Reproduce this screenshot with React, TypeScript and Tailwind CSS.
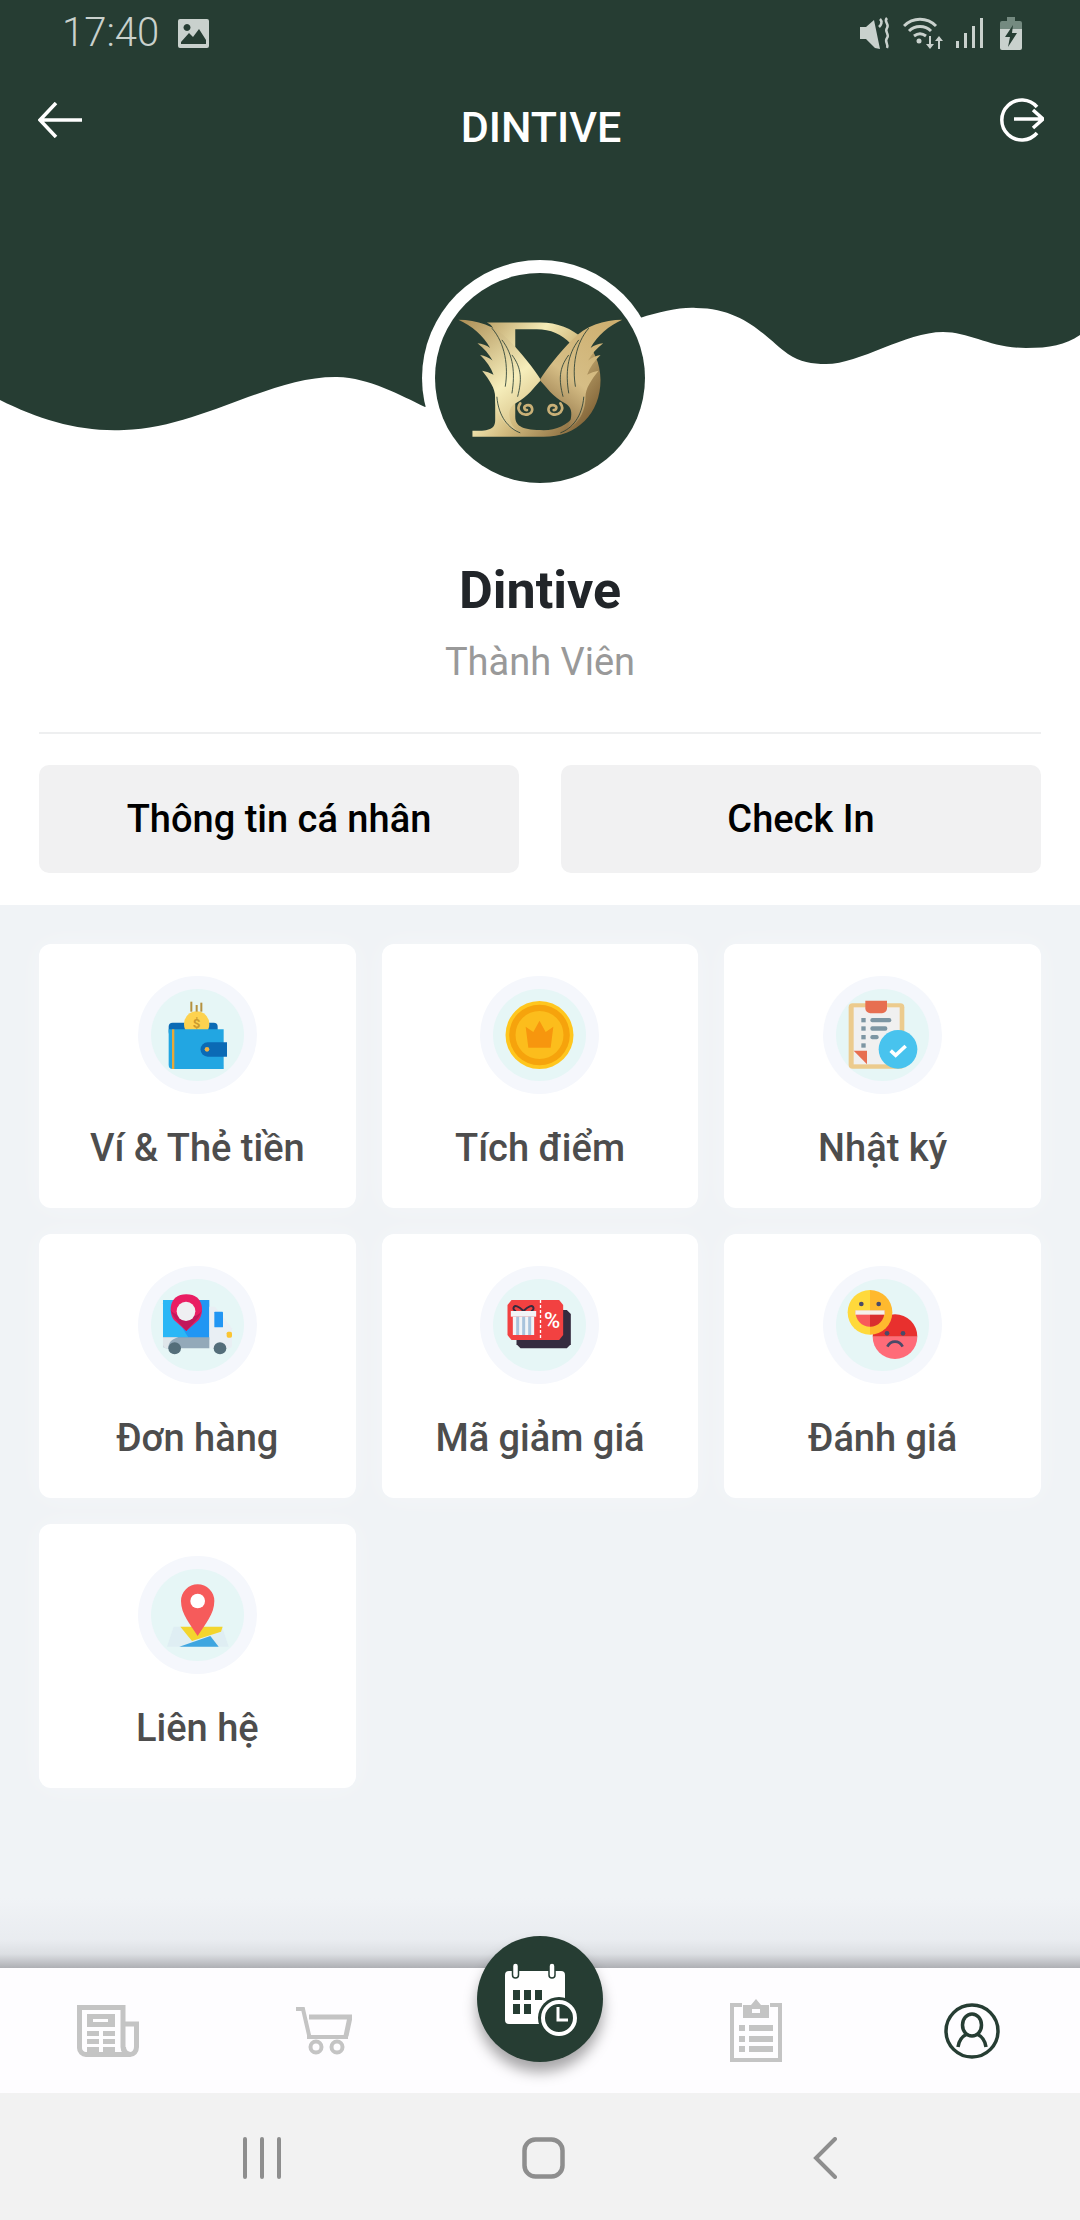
import * as React from 'react'

const FEATHER =
  'M235 240 C290 240 345 258 385 300 C425 340 460 385 482 420 C462 440 445 470 405 490 C392 497 385 510 388 530 C390 550 400 565 420 578 C370 560 345 520 345 470 C345 445 328 420 306 392 C318 394 330 398 340 404 C332 382 318 362 300 345 C314 347 326 353 337 362 C326 342 312 325 292 310 C306 311 318 316 330 324 C310 288 275 258 235 240Z'

function Logo() {
  return (
    <svg viewBox="165 100 628 628" className="w-full h-full">
      <defs>
        <linearGradient id="gold" x1="0" y1="0" x2="1" y2="0.7">
          <stop offset="0" stopColor="#b2945a" />
          <stop offset="0.4" stopColor="#f4ebb6" />
          <stop offset="0.62" stopColor="#d3bc80" />
          <stop offset="1" stopColor="#86683b" />
        </linearGradient>
        <linearGradient id="goldLeft" gradientUnits="userSpaceOnUse" x1="240" y1="240" x2="470" y2="540">
          <stop offset="0" stopColor="#ad8f56" />
          <stop offset="0.62" stopColor="#f6eebb" />
          <stop offset="1" stopColor="#d3bc82" />
        </linearGradient>
        <linearGradient id="goldRight" gradientUnits="userSpaceOnUse" x1="240" y1="240" x2="470" y2="540">
          <stop offset="0" stopColor="#cdae6e" />
          <stop offset="0.6" stopColor="#d6be86" />
          <stop offset="1" stopColor="#8a6c40" />
        </linearGradient>
      </defs>
      <path
        fill="url(#gold)"
        fillRule="evenodd"
        d="M320 248 H480 C580 248 660 320 660 420 C660 520 590 590 490 590 H277 V572 C320 572 345 570 345 540 V300 C345 265 335 255 320 248Z M405 268 V530 C405 560 430 570 490 570 C570 570 610 510 610 420 C610 330 550 268 470 268Z"
      />
      <path fill="url(#goldLeft)" d={FEATHER} />
      <path fill="url(#goldRight)" d={FEATHER} transform="translate(960 0) scale(-1 1)" />
      <g fill="none" stroke="#263d33" strokeWidth="2.5">
        <path d="M335 265 C375 310 385 380 375 440" />
        <path d="M365 300 C400 345 405 400 395 460" />
        <path d="M395 345 C425 385 425 420 412 470" />
        <path d="M350 470 C355 530 385 565 420 578" />
        <path d="M625 265 C585 310 575 380 585 440" />
        <path d="M595 300 C560 345 555 400 565 460" />
        <path d="M565 345 C535 385 535 420 548 470" />
        <path d="M610 470 C605 530 575 565 540 578" />
      </g>
      <g fill="none" stroke="#c9b077" strokeWidth="8" strokeLinecap="round">
        <path d="M420 490 C405 510 425 528 445 522 C462 515 458 492 438 496 C428 500 432 510 440 510" />
        <path d="M540 490 C555 510 535 528 515 522 C498 515 502 492 522 496 C532 500 528 510 520 510" />
      </g>
    </svg>
  )
}

function StatusBar() {
  return (
    <div className="relative h-[66px] flex items-center justify-between pl-[62px] pr-[58px] text-[#c9d1cd]">
      <div className="flex items-center gap-[19px]">
        <span className="text-[40px] font-light leading-none">17:40</span>
        <svg viewBox="0 0 31 29" className="w-[31px] h-[29px]">
          <path fill="currentColor" fillRule="evenodd" d="M2 0 H29 a2 2 0 0 1 2 2 V27 a2 2 0 0 1 -2 2 H2 a2 2 0 0 1 -2 -2 V2 a2 2 0 0 1 2 -2Z M3 25 H28 V21 L21 10 L15 18 L11 14 L3 23Z M9 5 a3.5 3.5 0 1 0 .01 0Z" />
        </svg>
      </div>
      <div className="flex items-center">
        <svg viewBox="0 0 31 32" className="w-[31px] h-[32px] mr-[12px]">
          <path fill="currentColor" d="M0 10 H6 L14 3 L20 32 L15 31 L6 22 H0Z" />
          <path fill="none" stroke="currentColor" strokeWidth="2.5" d="M27 1 c-4 4 3 6 0 10 c-3 4 3 6 0 10 c-3 4 2 6 0 10 M20 2 c3 3 1 6 -1 8" />
        </svg>
        <svg viewBox="0 0 41 32" className="w-[41px] h-[32px] mr-[12px]">
          <g fill="none" stroke="currentColor" strokeWidth="3">
            <path d="M1 9 C10 0 24 0 33 9" />
            <path d="M6 14 C12 8 22 8 28 14" />
            <path d="M11 19 C15 16 19 16 23 19" />
          </g>
          <circle cx="16" cy="24" r="2.5" fill="currentColor" />
          <path fill="currentColor" d="M26 19 H28 V27 H31 L27 32 L23 27 H26Z M35 32 H37 V24 H40 L36 19 L32 24 H35Z" />
        </svg>
        <svg viewBox="0 0 28 30" className="w-[28px] h-[30px] mr-[16px]">
          <path fill="currentColor" d="M0 23 H3 V30 H0Z M8 15 H11 V30 H8Z M16 8 H19 V30 H16Z M24 0 H27 V30 H24Z" />
        </svg>
        <svg viewBox="0 0 22 33" className="w-[22px] h-[33px]">
          <path fill="#748a80" d="M7 0 H15 V4 H20 a2 2 0 0 1 2 2 V12 H0 V6 a2 2 0 0 1 2 -2 H7Z" />
          <path fill="currentColor" d="M0 12 H22 V31 a2 2 0 0 1 -2 2 H2 a2 2 0 0 1 -2 -2Z" />
          <path fill="#263d33" d="M13 8 L5 20 H10 L8 30 L17 16 H12Z" />
        </svg>
      </div>
    </div>
  )
}

function AppBar() {
  return (
    <div className="relative h-[108px] flex items-center justify-between pl-[38px] pr-[36px]">
      <svg viewBox="0 0 44 36" className="w-[44px] h-[36px]" fill="none" stroke="white" strokeWidth="3.5">
        <path d="M44 18 H3 M18 1 L2 18 L18 35" />
      </svg>
      <span className="text-[43px] font-medium text-white leading-none mt-[14px]">DINTIVE</span>
      <svg viewBox="0 0 44 46" className="w-[44px] h-[46px]" fill="none" stroke="white" strokeWidth="3.5">
        <path d="M37 10 A20 20 0 1 0 37 36" />
        <path d="M14 22 H42 M33 13 L43 22 L33 31" />
      </svg>
    </div>
  )
}

function Hero() {
  return (
    <section className="relative bg-white h-[905px] shrink-0">
      <svg viewBox="0 0 1080 440" className="absolute top-0 left-0 w-[1080px] h-[440px]">
        <path
          fill="#263d33"
          d="M0 0 H1080 V335 C1065 345 1050 348 1026 348 C990 348 970 332 943 332 C905 332 860 364 826 364 C812 364 800 362 788 354 C768 340 745 308 696 308 C680 307 660 312 640 318 L425 407 C400 395 370 378 337 377 C270 376 200 428 124 430 C80 432 40 420 0 400Z"
        />
      </svg>
      <StatusBar />
      <AppBar />
      <div className="relative mt-[86px] mx-auto w-[236px] h-[236px] rounded-full bg-white p-[13px]">
        <div className="w-full h-full rounded-full bg-[#263d33]">
          <Logo />
        </div>
      </div>
      <div className="relative mt-[65px] flex flex-col items-center">
        <h1 className="text-[52px] font-bold leading-[60px] text-[#212529]">Dintive</h1>
        <p className="mt-[17px] text-[38px] leading-[48px] text-[#999999]">Thành Viên</p>
      </div>
      <div className="mt-[46px] mx-[39px] h-[2px] bg-[#eeeff0]" />
      <div className="mt-[31px] mx-[39px] flex gap-[42px]">
        <button className="flex-1 h-[108px] rounded-[10px] bg-[#f1f1f2] text-[38px] font-medium text-black">Thông tin cá nhân</button>
        <button className="flex-1 h-[108px] rounded-[10px] bg-[#f1f1f2] text-[38px] font-medium text-black">Check In</button>
      </div>
    </section>
  )
}

function WalletIcon() {
  return (
    <svg viewBox="113 48 357 354" className="w-full h-full">
      <rect x="205" y="188" width="147" height="40" rx="12" fill="#0b6ab5" />
      <circle cx="289" cy="192" r="38" fill="#fdd24f" />
      <rect x="270" y="125" width="6" height="30" fill="#b5913f" />
      <rect x="286" y="135" width="6" height="20" fill="#b5913f" />
      <rect x="300" y="128" width="6" height="27" fill="#b5913f" />
      <text x="289" y="205" textAnchor="middle" fontSize="40" fontWeight="700" fill="#c99a2e" fontFamily="Roboto, sans-serif">$</text>
      <path d="M205 208 H370 V327 H217 a12 12 0 0 1 -12 -12Z" fill="#22a6e2" />
      <rect x="215" y="208" width="7" height="119" fill="#e8a838" />
      <path d="M322 247 H380 V290 H322 a21 21 0 0 1 0 -43Z" fill="#0b6ab5" />
      <circle cx="320" cy="268" r="7" fill="#f0b040" />
    </svg>
  )
}

function CoinIcon() {
  return (
    <svg viewBox="113 48 357 354" className="w-full h-full">
      <circle cx="291.5" cy="225" r="102" fill="#ffc61e" />
      <circle cx="291.5" cy="225" r="91" fill="#f6a30c" />
      <circle cx="291.5" cy="225" r="72" fill="#fcbd1c" />
      <path d="M258 263 L250 200 L273 216 L291.5 182 L310 216 L333 200 L325 263Z" fill="#f7960e" />
    </svg>
  )
}

function ClipboardIcon() {
  return (
    <svg viewBox="128 48 357 354" className="w-full h-full">
      <rect x="205" y="130" width="167" height="196" rx="12" fill="#eccb8d" />
      <rect x="220" y="142" width="138" height="171" fill="#f0f0f0" />
      <path d="M255 122 H320 V145 a15 15 0 0 1 -15 15 H270 a15 15 0 0 1 -15 -15Z" fill="#e76f51" />
      <g fill="#7d96a3">
        <rect x="243" y="174" width="13" height="13" />
        <rect x="243" y="199" width="13" height="13" />
        <rect x="243" y="225" width="13" height="13" />
        <rect x="243" y="250" width="13" height="13" />
        <rect x="270" y="174" width="63" height="13" rx="6" />
        <rect x="270" y="199" width="51" height="13" rx="6" />
        <rect x="270" y="225" width="25" height="13" rx="6" />
      </g>
      <path d="M220 272 H260 V313Z" fill="#e76f51" />
      <circle cx="353" cy="268" r="58" fill="#48c3ee" />
      <path d="M331 272 L346 286 L376 258" fill="none" stroke="white" strokeWidth="11" />
    </svg>
  )
}

function TruckIcon() {
  return (
    <svg viewBox="114 48 357 354" className="w-full h-full">
      <path d="M189 160 a10 10 0 0 1 10 -10 H328 V270 H189Z" fill="#2196f3" />
      <path d="M189 150 H225 C225 200 250 240 265 262 H189Z" fill="#2ab7f6" />
      <path d="M328 170 H345 L396 235 V285 a10 10 0 0 1 -10 10 H328Z" fill="#e9eff4" />
      <rect x="343" y="185" width="26" height="47" rx="2" fill="#2196f3" />
      <rect x="380" y="245" width="16" height="18" rx="5" fill="#fbc531" />
      <path d="M189 262 H328 V295 H199 a10 10 0 0 1 -10 -10Z" fill="#93a9b9" />
      <path d="M189 262 H235 C215 268 205 278 205 295 H199 a10 10 0 0 1 -10 -10Z" fill="#dfe6ea" />
      <ellipse cx="224" cy="295" rx="19" ry="18" fill="#546e7a" />
      <ellipse cx="360" cy="295" rx="19" ry="18" fill="#546e7a" />
      <path d="M259 243 L222 210 C205 190 205 133 259 133 C313 133 313 190 296 210Z" fill="#e91e63" />
      <path d="M259 243 C245 225 218 205 212 180 C225 200 290 215 306 180 C300 205 272 225 259 243Z" fill="#c2185b" />
      <ellipse cx="258" cy="184" rx="28" ry="29" fill="#efeff2" />
    </svg>
  )
}

function VoucherIcon() {
  return (
    <svg viewBox="1143 48 354 354" className="w-full h-full">
      <path d="M1251 180 H1402 L1414 192 V283 L1402 295 H1263 L1251 283Z" fill="#352c3f" />
      <path d="M1236 150 H1379 L1391 165 V255 L1379 270 H1236 L1224 255 V165Z" fill="#f24141" />
      <path d="M1323 150 V270" stroke="white" strokeWidth="4" strokeDasharray="9 6" />
      <path d="M1272 183 C1240 150 1235 183 1250 183 M1272 183 C1304 150 1309 183 1294 183" fill="none" stroke="#352c3f" strokeWidth="6" />
      <rect x="1234" y="183" width="76" height="17" fill="#f2f4f7" />
      <rect x="1240" y="200" width="64" height="55" fill="#f2f4f7" />
      <rect x="1250" y="200" width="9" height="55" fill="#a9c3dc" />
      <rect x="1268" y="200" width="9" height="55" fill="#a9c3dc" />
      <rect x="1286" y="200" width="9" height="55" fill="#a9c3dc" />
      <text x="1358" y="235" textAnchor="middle" fontSize="66" fontWeight="500" fill="white" fontFamily="Roboto, sans-serif">%</text>
    </svg>
  )
}

function EmojiIcon() {
  return (
    <svg viewBox="2169 48 357 354" className="w-full h-full">
      <path d="M2385 193 a67 67 0 0 1 67 67 H2318 a67 67 0 0 1 67 -67Z" fill="#e8302e" />
      <path d="M2318 260 H2452 a67 67 0 0 1 -134 0Z" fill="#ff6b78" />
      <circle cx="2361" cy="250" r="7" fill="#4a4a68" />
      <circle cx="2409" cy="250" r="7" fill="#4a4a68" />
      <path d="M2362 290 C2372 270 2398 270 2408 290" fill="none" stroke="#4a4a68" strokeWidth="8" />
      <path d="M2310 120 a67 67 0 0 0 0 134Z" fill="#ffd93b" />
      <path d="M2310 120 a67 67 0 0 1 0 134Z" fill="#ffb92e" />
      <circle cx="2284" cy="162" r="7" fill="#4a4a68" />
      <circle cx="2336" cy="162" r="7" fill="#4a4a68" />
      <path d="M2266 182 H2310 V230 C2285 230 2266 210 2266 182Z" fill="#f85a5a" />
      <path d="M2310 182 H2354 C2354 210 2335 230 2310 230Z" fill="#d92f2f" />
      <rect x="2266" y="181" width="88" height="13" fill="#f5f0ea" />
    </svg>
  )
}

function MapPinIcon() {
  return (
    <svg viewBox="113 75 357 354" className="w-full h-full">
      <path d="M220 287 H365 L385 347 H200Z" fill="#dfeef3" />
      <path d="M240 287 H367 L362 302 L275 330Z" fill="#f3d52d" />
      <path d="M237 347 L330 315 L355 347Z" fill="#3ea6e0" />
      <path d="M292 315 C270 280 242 250 242 210 a50 50 0 0 1 100 0 C342 250 314 280 292 315Z" fill="#f65b5b" />
      <circle cx="292" cy="210" r="22" fill="white" />
    </svg>
  )
}

const tiles = [
  { label: 'Ví & Thẻ tiền', icon: <WalletIcon /> },
  { label: 'Tích điểm', icon: <CoinIcon /> },
  { label: 'Nhật ký', icon: <ClipboardIcon /> },
  { label: 'Đơn hàng', icon: <TruckIcon /> },
  { label: 'Mã giảm giá', icon: <VoucherIcon /> },
  { label: 'Đánh giá', icon: <EmojiIcon /> },
  { label: 'Liên hệ', icon: <MapPinIcon /> },
]

function Tile({ label, icon }: { label: string; icon: React.ReactNode }) {
  return (
    <div className="h-[264px] rounded-[12px] bg-white flex flex-col items-center pt-[32px] shadow-[0_0_30px_rgba(255,255,255,0.35)]">
      <div className="relative w-[119px] h-[118px] rounded-full bg-[#f5f7fc] flex items-center justify-center">
        <div className="w-[93px] h-[92px] rounded-full bg-[#e6f6f6]" />
        <div className="absolute inset-0">{icon}</div>
      </div>
      <span className="mt-[30px] text-[38px] leading-[48px] font-medium text-[#4d4d4d]">{label}</span>
    </div>
  )
}

function BottomNav() {
  return (
    <nav className="relative h-[125px] shrink-0 bg-[#fefdff] grid grid-cols-5 items-center justify-items-center">
      <svg viewBox="0 0 62 52" className="w-[62px] h-[52px]" fill="none" stroke="#c4c4c4" strokeWidth="5">
        <path d="M2.5 2.5 H46 V42 a7.5 7.5 0 0 0 7.5 7.5 H9 a6.5 6.5 0 0 1 -6.5 -6.5Z" />
        <path d="M46 19 H59.5 V42 a6.5 7.5 0 0 1 -13 0" />
        <g fill="#c4c4c4" stroke="none">
          <path fillRule="evenodd" d="M10 9 H38 V22 H10Z M16 14 V17 H31 V14Z" />
          <rect x="10" y="26" width="12" height="5" />
          <rect x="26" y="26" width="12" height="5" />
          <rect x="10" y="34" width="12" height="5" />
          <rect x="26" y="34" width="12" height="5" />
          <rect x="10" y="42" width="12" height="5" />
          <rect x="26" y="42" width="12" height="5" />
        </g>
      </svg>
      <svg viewBox="0 0 56 48" className="w-[56px] h-[48px]" fill="none" stroke="#c4c4c4" strokeWidth="4">
        <path d="M0 2 H7 L13 28 V30 H52" />
        <path d="M13 10 H54 L50 29" strokeWidth="5" />
        <circle cx="20" cy="40" r="5.5" />
        <circle cx="41" cy="40" r="5.5" />
      </svg>
      <div />
      <svg viewBox="0 0 52 63" className="w-[52px] h-[63px]" fill="none" stroke="#c4c4c4" strokeWidth="4">
        <path d="M12 6 H2 V61 H50 V6 H40" />
        <path d="M13 6 H21 L26 0 L31 6 H39 V19 H13Z" fill="#c4c4c4" stroke="none" />
        <path d="M22 10 H30 V14 H22Z" fill="#fefdff" stroke="none" />
        <g fill="#c4c4c4" stroke="none">
          <rect x="9" y="26" width="6" height="6" />
          <rect x="19" y="26" width="24" height="6" />
          <rect x="9" y="37" width="6" height="6" />
          <rect x="19" y="37" width="24" height="6" />
          <rect x="9" y="47" width="6" height="6" />
          <rect x="19" y="47" width="24" height="6" />
        </g>
      </svg>
      <svg viewBox="0 0 56 56" className="w-[56px] h-[56px]" fill="none" stroke="#263d33" strokeWidth="3.5">
        <circle cx="28" cy="28" r="26" />
        <ellipse cx="28" cy="22" rx="9.5" ry="11" />
        <path d="M14 44 C15 36 19 33 23 31 M42 44 C41 36 37 33 33 31" />
      </svg>
      <div className="absolute left-[477px] top-[-32px] w-[126px] h-[126px] rounded-full bg-[#263d33] flex items-center justify-center shadow-[0_10px_14px_rgba(0,0,0,0.35)]">
        <svg viewBox="0 0 73 74" className="w-[73px] h-[74px] ml-[3px] mt-[2px]">
          <path fillRule="evenodd" fill="white" d="M4 8 H56 a4 4 0 0 1 4 4 V40 H40 V61 H4 a4 4 0 0 1 -4 -4 V12 a4 4 0 0 1 4 -4Z M8 27 V37 H15 V27Z M19 27 V37 H26 V27Z M30 27 V37 H37 V27Z M8 41 V51 H15 V41Z M19 41 V51 H26 V41Z" />
          <rect x="7.5" y="0" width="6" height="15" rx="3" fill="white" stroke="#263d33" strokeWidth="1.5" />
          <rect x="44" y="0" width="6" height="15" rx="3" fill="white" stroke="#263d33" strokeWidth="1.5" />
          <circle cx="54" cy="55" r="21" fill="#263d33" />
          <circle cx="54" cy="55" r="16" fill="none" stroke="white" strokeWidth="4" />
          <path d="M53 44 V57 H63" fill="none" stroke="white" strokeWidth="3" />
        </svg>
      </div>
    </nav>
  )
}

function SystemBar() {
  return (
    <div className="h-[127px] shrink-0 bg-[#f2f2f2] flex items-center justify-center text-[#8e8e8e] pt-[2px]">
      <svg viewBox="0 0 38 42" className="w-[38px] h-[42px]" stroke="currentColor" strokeWidth="4" strokeLinecap="round">
        <path d="M2 2 V40 M19 2 V40 M36 2 V40" />
      </svg>
      <svg viewBox="0 0 43 42" className="w-[43px] h-[42px] ml-[241px]" fill="none" stroke="currentColor" strokeWidth="4.5">
        <rect x="2.5" y="2.5" width="38" height="37" rx="11" />
      </svg>
      <svg viewBox="0 0 24 42" className="w-[24px] h-[42px] ml-[248px]" fill="none" stroke="currentColor" strokeWidth="4" strokeLinecap="round">
        <path d="M22 2 L3 21 L22 40" />
      </svg>
    </div>
  )
}

export default function App() {
  return (
    <div className="w-[1080px] h-[2220px] flex flex-col overflow-hidden bg-[#f0f3f6] font-['Roboto',sans-serif]">
      <Hero />
      <main className="flex-1 flex flex-col">
        <div className="px-[39px] pt-[39px] grid grid-cols-3 gap-x-[26px] gap-y-[26px]">
          {tiles.map((t) => (
            <Tile key={t.label} label={t.label} icon={t.icon} />
          ))}
        </div>
        <div className="mt-auto h-[70px] bg-[linear-gradient(to_bottom,#f0f3f6_0%,#e9ecf0_60%,#dcdfe3_80%,#aeafb4_100%)]" />
      </main>
      <BottomNav />
      <SystemBar />
    </div>
  )
}
